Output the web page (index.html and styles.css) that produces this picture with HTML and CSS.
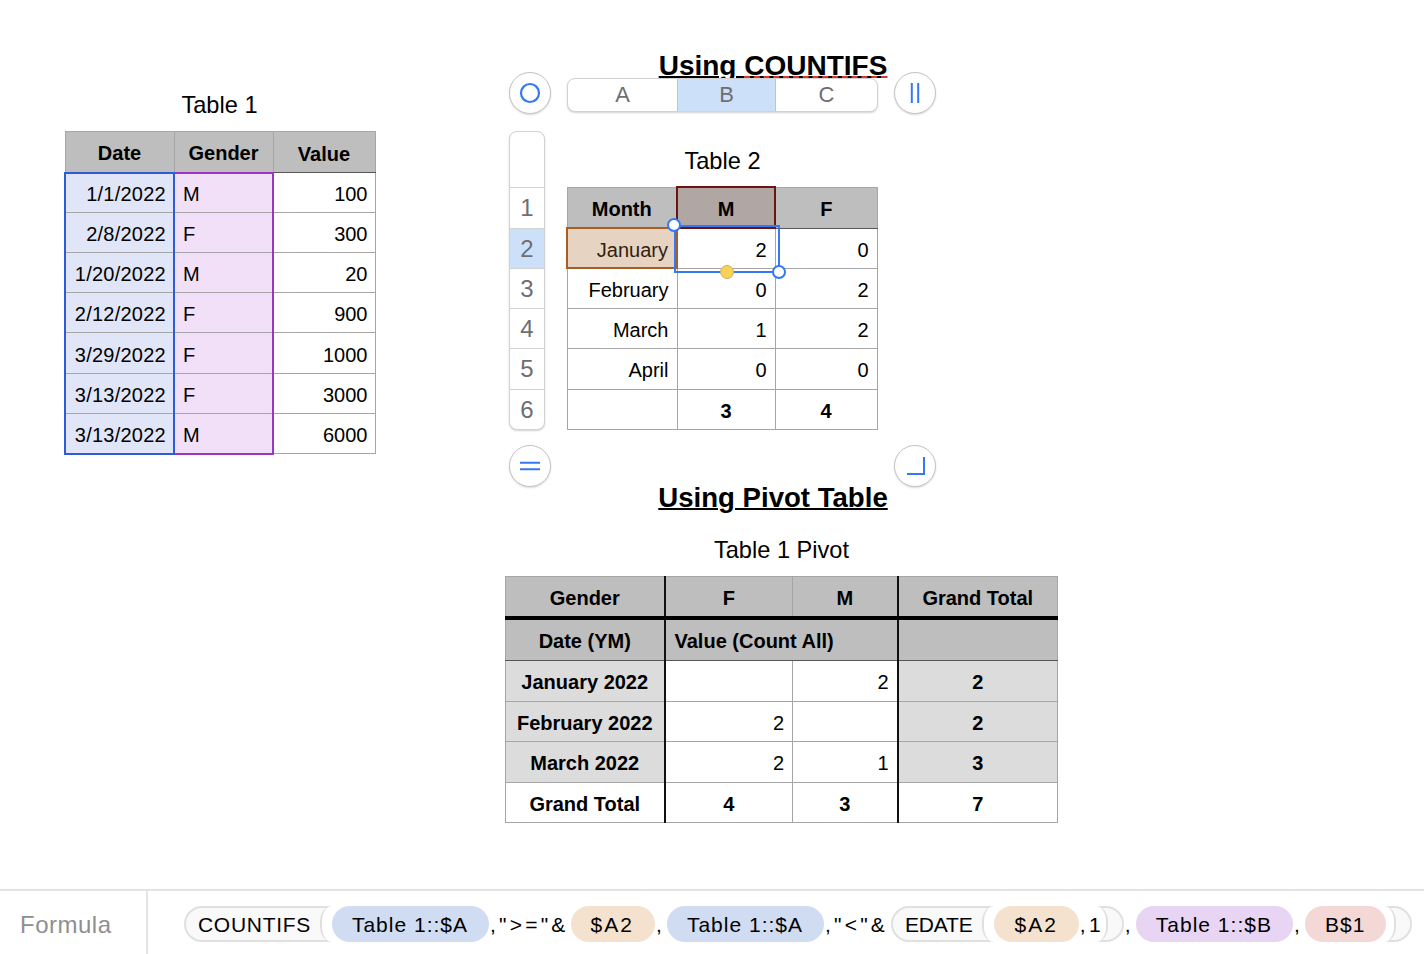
FILE: index.html
```html
<!doctype html>
<html>
<head>
<meta charset="utf-8">
<title>Numbers sheet</title>
<link rel="stylesheet" href="styles.css">
</head>

<body>
	<div class="sheet">
		<div class="left-col">
			<div class="table-title t1-title">Table 1</div>
			<table class="grid t1">
				<colgroup><col class="w109"><col class="w99"><col class="w102"></colgroup>
				<tr class="r41 head"><th>Date</th><th>Gender</th><th>Value</th></tr>
				<tr class="r40 first"><td class="ref-a">1/1/2022</td><td class="ref-b txt">M</td><td>100</td></tr>
				<tr class="r40"><td class="ref-a">2/8/2022</td><td class="ref-b txt">F</td><td>300</td></tr>
				<tr class="r40"><td class="ref-a">1/20/2022</td><td class="ref-b txt">M</td><td>20</td></tr>
				<tr class="r40"><td class="ref-a">2/12/2022</td><td class="ref-b txt">F</td><td>900</td></tr>
				<tr class="r41"><td class="ref-a">3/29/2022</td><td class="ref-b txt">F</td><td>1000</td></tr>
				<tr class="r40"><td class="ref-a">3/13/2022</td><td class="ref-b txt">F</td><td>3000</td></tr>
				<tr class="r40 last"><td class="ref-a">3/13/2022</td><td class="ref-b txt">M</td><td>6000</td></tr>
			</table>
		</div>

		<div class="right-col">
			<h2 class="heading plain">Using <span class="spell">COUNTIFS</span></h2>

			<div class="t2-block">
				<div class="table-title">Table 2</div>
				<div class="t2-wrap">
					<table class="grid t2">
						<colgroup><col class="w110"><col class="w98"><col class="w102"></colgroup>
						<tr class="r41 head"><th>Month</th><th class="ref-m">M</th><th>F</th></tr>
						<tr class="r40"><td class="ref-jan">January</td><td>2</td><td>0</td></tr>
						<tr class="r40"><td>February</td><td>0</td><td>2</td></tr>
						<tr class="r40"><td>March</td><td>1</td><td>2</td></tr>
						<tr class="r41"><td>April</td><td>0</td><td>0</td></tr>
						<tr class="r40 foot"><td></td><td>3</td><td>4</td></tr>
					</table>

					<div class="col-bar">
						<div class="col-a">A</div>
						<div class="col-b on">B</div>
						<div class="col-c">C</div>
					</div>
					<div class="row-bar">
						<div class="corner"></div>
						<div class="r40b">1</div>
						<div class="r40a on">2</div>
						<div class="r40a">3</div>
						<div class="r40a">4</div>
						<div class="r40b">5</div>
						<div class="r40a">6</div>
					</div>

					<div class="knob k-tl">
						<svg width="24" height="24" viewBox="0 0 24 24"><circle cx="12" cy="12" r="9" fill="none" stroke="#3478f6" stroke-width="2.2"/></svg>
					</div>
					<div class="knob k-tr">
						<svg width="24" height="24" viewBox="0 0 24 24"><path d="M8.8 2v20M15.2 2v20" fill="none" stroke="#3478f6" stroke-width="2"/></svg>
					</div>
					<div class="knob k-bl">
						<svg width="24" height="24" viewBox="0 0 24 24"><path d="M2 8.7h20M2 15.3h20" fill="none" stroke="#3478f6" stroke-width="2"/></svg>
					</div>
					<div class="knob k-br">
						<svg width="24" height="24" viewBox="0 0 24 24"><path d="M21 3v17H4" fill="none" stroke="#3478f6" stroke-width="2"/></svg>
					</div>

					<div class="selection">
						<span class="dot dot-tl"></span>
						<span class="dot dot-mid"></span>
						<span class="dot dot-br"></span>
					</div>
				</div>
			</div>

			<h2 class="heading pivot-head">Using Pivot Table</h2>

			<div class="table-title pivot-title">Table 1 Pivot</div>
			<table class="grid pivot">
				<colgroup><col class="w159"><col class="w128"><col class="w105"><col class="w160"></colgroup>
				<tr class="r42 head p-top"><th class="sep">Gender</th><th>F</th><th class="sep">M</th><th>Grand Total</th></tr>
				<tr class="r42 head p-sub"><th class="sep">Date (YM)</th><th class="p-span sep" colspan="2">Value (Count All)</th><th></th></tr>
				<tr class="r41"><th class="side sep">January 2022</th><td></td><td class="sep">2</td><th class="side">2</th></tr>
				<tr class="r40"><th class="side sep">February 2022</th><td>2</td><td class="sep"></td><th class="side">2</th></tr>
				<tr class="r41"><th class="side sep">March 2022</th><td>2</td><td class="sep">1</td><th class="side">3</th></tr>
				<tr class="r40 foot"><th class="sep">Grand Total</th><th>4</th><th class="sep">3</th><th>7</th></tr>
			</table>
		</div>
	</div>

	<div class="formula-bar">
		<div class="formula-label">Formula</div>
		<div class="formula">
			<span class="fn">COUNTIFS</span>
			<span class="chip blue">Table 1::$A</span>
			<span class="plain-tok">,"&gt;="&amp;</span>
			<span class="chip tan">$A2</span>
			<span class="plain-tok comma">,</span>
			<span class="chip blue">Table 1::$A</span>
			<span class="plain-tok">,"&lt;"&amp;</span>
			<span class="fn edate">EDATE</span>
			<span class="chip tan">$A2</span>
			<span class="plain-tok arg">,1</span>
			<span class="close"></span>
			<span class="plain-tok comma">,</span>
			<span class="chip violet">Table 1::$B</span>
			<span class="plain-tok comma">,</span>
			<span class="chip rose">B$1</span>
			<span class="close end"></span>
		</div>
	</div>
</body>
</html>
```

FILE: styles.css
```css
html, body {
	margin: 0;
	height: 100%;
	overflow: hidden;
	background: #fff;
}
body {
	display: flex;
	flex-direction: column;
	font-family: "Liberation Sans", Arial, sans-serif;
	color: #000;
}

/* sheet canvas */
.sheet {
	flex: 1;
	display: flex;
	padding-left: 65px;
}
.left-col {
	width: 311px;
	padding-top: 90px;
}
.right-col {
	width: 553px;
	margin-left: 129px;
	padding-top: 48px;
}
.table-title {
	height: 30px;
	line-height: 30px;
	margin-bottom: 11px;
	font-size: 23.6px;
	text-align: center;
}
.t1-title {
	padding-right: 2px;
}
.heading {
	margin: 0;
	height: 36px;
	line-height: 36px;
	font-size: 28px;
	font-weight: 700;
	text-align: center;
	padding-right: 17px;
	text-decoration: underline;
	text-decoration-thickness: 2px;
}
.spell {
	position: relative;
}
.spell::after {
	content: "";
	position: absolute;
	z-index: 1;
	left: 0;
	right: 0;
	bottom: 3px;
	border-top: 2px dashed #d8392b;
}
.t2-block {
	margin: 62px 0 0 62px;
	width: 311px;
}
.pivot-head {
	margin-top: 50px;
	font-size: 27.6px;
}
.pivot-title {
	margin-top: 19px;
}

/* tables */
.grid {
	border-collapse: collapse;
	table-layout: fixed;
	font-size: 20px;
}
.t1 {
	width: 310px;
	margin-left: -1px;
}
.t2 {
	width: 310px;
	margin: -1px 0 0 -1px;
}
.pivot {
	width: 552px;
}
.w98 { width: 98px; }
.w99 { width: 99px; }
.w102 { width: 102px; }
.w105 { width: 105px; }
.w109 { width: 109px; }
.w110 { width: 110px; }
.w128 { width: 128px; }
.w159 { width: 159px; }
.w160 { width: 160px; }
.r40 { height: 40px; }
.r41 { height: 41px; }
.r42 { height: 42px; }
.grid th, .grid td {
	border: 1px solid #a6a6a6;
	padding: 4px 8px 0;
	overflow: hidden;
	white-space: nowrap;
}
.grid td {
	text-align: right;
}
.t1 td {
	padding-right: 7px;
}
.grid th {
	text-align: center;
	font-weight: 700;
}
.head th {
	background: #bdbebd;
	border-bottom-color: #555;
}
.grid td.txt {
	text-align: left;
}

/* reference colouring, table 1 */
.grid td.ref-a {
	background: #e0e6f8;
	border-left: 2px solid #2f5bd8;
	border-right: 2px solid #2f5bd8;
	letter-spacing: .25px;
}
.grid td.ref-b {
	background: #f1e0f7;
	border-left: 2px solid #9b36c4;
	border-right: 2px solid #9b36c4;
}
.grid .first .ref-a { border-top: 2px solid #2f5bd8; }
.grid .first .ref-b { border-top: 2px solid #9b36c4; }
.grid .last .ref-a { border-bottom: 2px solid #2f5bd8; }
.grid .last .ref-b { border-bottom: 2px solid #9b36c4; }

/* reference colouring, table 2 */
.grid th.ref-m {
	background: #b0a6a4;
	border: 2px solid #6b1510;
}
.grid td.ref-jan {
	background: #e6d3c1;
	border: 2px solid #a85d22;
	color: #33200f;
}
.foot td {
	font-weight: 700;
}
.t2 .foot td {
	text-align: center;
	border-top-color: #444;
}

/* pivot */
.grid .sep {
	border-right: 2px solid #111;
}
.p-top th {
	border-bottom: 4px solid #000;
}
.grid .p-span {
	text-align: left;
	padding-left: 9px;
}
.grid th.side {
	background: #dcdcdc;
}
.foot th {
	background: #fff;
}

/* handles laid over table 2 */
.t2-wrap {
	position: relative;
}
.col-bar {
	position: absolute;
	left: 0;
	top: -108px;
	width: 311px;
	height: 34px;
	box-sizing: border-box;
	display: flex;
	background: #fff;
	border: 1px solid #d2d2d2;
	border-radius: 8px;
	box-shadow: 0 1px 2px rgba(0,0,0,.18);
	overflow: hidden;
	font-size: 22px;
	color: #6e6e73;
	text-align: center;
	line-height: 31px;
}
.col-a { width: 109px; }
.col-b { width: 99px; }
.col-c { flex: 1; }
.col-b.on {
	background: #cde0fa;
	border-left: 1px solid #b4c5e0;
	border-right: 1px solid #b4c5e0;
	box-sizing: border-box;
}
.row-bar {
	position: absolute;
	left: -58px;
	top: -55px;
	width: 36px;
	box-sizing: border-box;
	background: #fff;
	border: 1px solid #d2d2d2;
	border-radius: 8px;
	box-shadow: 0 1px 2px rgba(0,0,0,.18);
	overflow: hidden;
	font-size: 24px;
	color: #6e6e73;
	text-align: center;
}
.row-bar .corner {
	height: 55px;
}
.r40a, .r40b {
	box-sizing: border-box;
	border-top: 1px solid #d2d2d2;
}
.r40a { height: 40px; line-height: 39px; }
.r40b { height: 41px; line-height: 40px; }
.row-bar .on {
	background: #cde0fa;
}
.knob {
	position: absolute;
	width: 42px;
	height: 42px;
	box-sizing: border-box;
	display: flex;
	align-items: center;
	justify-content: center;
	background: #fff;
	border: 1.5px solid #c4c4c4;
	border-radius: 50%;
	box-shadow: 0 1px 2px rgba(0,0,0,.15);
}
.k-tl { left: -58px; top: -114px; }
.k-tr { left: 327px; top: -114px; }
.k-bl { left: -58px; top: 259px; }
.k-br { left: 327px; top: 259px; }
.selection {
	position: absolute;
	left: 107px;
	top: 39px;
	width: 106px;
	height: 48px;
	box-sizing: border-box;
	border: 2px solid #3478f6;
}
.dot {
	position: absolute;
	width: 14px;
	height: 14px;
	box-sizing: border-box;
	background: #fff;
	border: 2px solid #3478f6;
	border-radius: 50%;
}
.dot-tl { left: -9px; top: -9px; }
.dot-br { right: -8px; bottom: -8px; }
.dot-mid {
	left: 44px;
	bottom: -8px;
	background: #f8d155;
	border: 1px solid #c9b26a;
}

/* formula bar */
.formula-bar {
	height: 65px;
	box-sizing: border-box;
	border-top: 2px solid #e4e4e4;
	display: flex;
	font-size: 21px;
	letter-spacing: .7px;
}
.formula-label {
	border-right: 2px solid #e4e4e4;
	padding: 20px 0 0 20px;
	width: 126px;
	font-size: 24px;
	letter-spacing: .5px;
	color: #8f8f8f;
}
.formula {
	display: flex;
	align-items: center;
	height: 36px;
	margin: 15px 0 0 36px;
	white-space: nowrap;
}
.chip {
	height: 36px;
	line-height: 37px;
	padding: 0 21px 0 20px;
	border-radius: 18px;
	position: relative;
	z-index: 1;
	letter-spacing: 1px;
}
.blue { background: #d0dcf2; }
.tan { background: #f4e2ce; letter-spacing: 2px; }
.violet { background: #e7d5f3; }
.rose { background: #f3d8d6; }
.fn {
	position: relative;
	height: 36px;
	box-sizing: border-box;
	line-height: 33px;
	padding: 0 21px 0 12px;
	background: #f9f9f9;
	border: 2px solid #e0e0e0;
	border-right: 0;
	border-radius: 18px 0 0 18px;
}
.edate {
	letter-spacing: -.2px;
	margin-left: 1px;
	padding-right: 22px;
}
.fn::after {
	content: "";
	position: absolute;
	right: 0;
	top: -2px;
	width: 12px;
	height: 36px;
	box-sizing: border-box;
	background: #fff;
	border-left: 2px solid #e0e0e0;
	border-radius: 14px 0 0 14px / 18px 0 0 18px;
}
.plain-tok {
	margin: 0 2px 0 1px;
	letter-spacing: 3.2px;
	line-height: 37px;
}
.comma {
	margin: 0 2px 0 1px;
}
.arg {
	position: relative;
	z-index: 2;
}
.close {
	position: relative;
	width: 28px;
	height: 36px;
	margin-left: -10px;
	box-sizing: border-box;
	background: #f9f9f9;
	border: 2px solid #e0e0e0;
	border-left: 0;
	border-radius: 0 18px 18px 0;
}
.close::before {
	content: "";
	position: absolute;
	left: 0;
	top: -2px;
	width: 12px;
	height: 36px;
	box-sizing: border-box;
	background: #fff;
	border-right: 2px solid #e0e0e0;
	border-radius: 0 14px 14px 0 / 0 18px 18px 0;
}
.close.end {
	margin-left: -2px;
}
```
